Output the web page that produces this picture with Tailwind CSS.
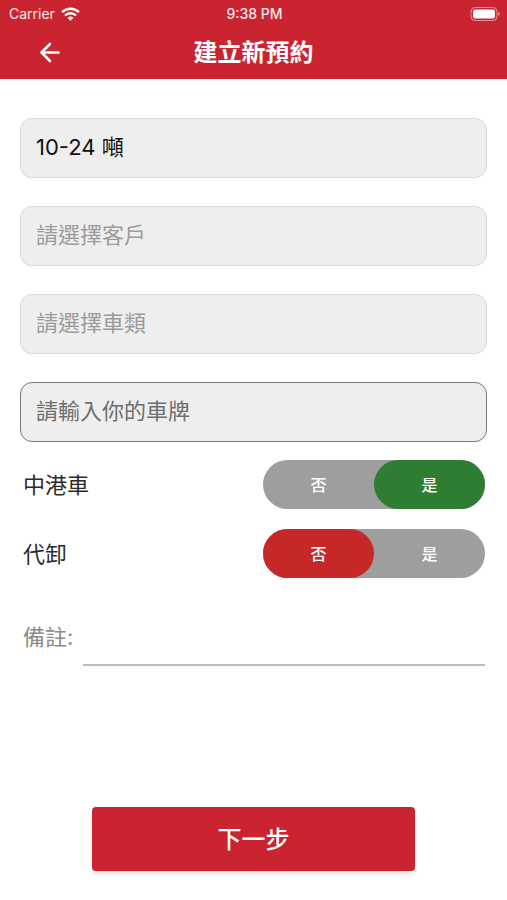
<!DOCTYPE html>
<html lang="zh-Hant">
<head>
  <meta charset="UTF-8" />
  <meta name="viewport" content="width=device-width, initial-scale=1.0" />
  <title>建立新預約</title>
  <script src="https://cdn.jsdelivr.net/npm/@tailwindcss/browser@4"></script>
</head>
<body class="bg-white font-['Inter','Noto_Sans_CJK_TC',sans-serif]">
  <div class="flex min-h-screen flex-col">

    <header class="bg-[#c9242f] text-white">
      <!-- status bar -->
      <div class="grid h-[27px] grid-cols-3 items-center pr-[7px] pl-[9px] text-sm text-white/90">
        <div class="flex items-center gap-1.5">
          <span>Carrier</span>
          <svg class="h-[14px] w-[19px]" viewBox="0 0 19 14" fill="none" stroke="#fff" stroke-width="2.4">
            <path d="M1 5.2a12.2 12.2 0 0 1 17 0" />
            <path d="M4 8.5a7.9 7.9 0 0 1 11 0" />
            <path d="M9.5 13.8 6.6 10.9a4.1 4.1 0 0 1 5.8 0z" fill="#fff" stroke="none" />
          </svg>
        </div>
        <span class="text-center font-medium">9:38 PM</span>
        <svg class="h-[14px] w-[30px] justify-self-end" viewBox="0 0 30 14" fill="none">
          <rect x="1" y="0.5" width="26" height="13" rx="4" stroke="#fff" stroke-opacity=".5" />
          <rect x="3" y="2.5" width="22" height="9" rx="2" fill="#fff" />
          <path d="M28.3 5v4c1-.4 1.5-1.1 1.5-2s-.5-1.6-1.5-2z" fill="#fff" fill-opacity=".5" />
        </svg>
      </div>
      <!-- app bar -->
      <div class="grid h-[52px] grid-cols-[100px_1fr_100px] items-center">
        <button type="button" aria-label="返回" class="flex h-full items-center justify-center">
          <svg class="size-6" viewBox="0 0 24 24" fill="none" stroke="#fff" stroke-width="2.6" stroke-linecap="round" stroke-linejoin="round">
            <path d="M20.500 11.500H3.500M12 3 3.500 11.500 12 20" />
          </svg>
        </button>
        <h1 class="text-center text-2xl font-bold">建立新預約</h1>
      </div>
    </header>

    <form class="flex grow flex-col px-5 pt-[39px] pb-[29px]">
      <div class="flex flex-col gap-7 text-[22px]">
        <select aria-label="噸數" class="h-[60px] appearance-none rounded-xl border border-[#d9d9d9] bg-[#eeeeee] px-[15px] pb-0.5 text-[#111]">
          <option>10-24 噸</option>
        </select>
        <select aria-label="客戶" class="h-[60px] appearance-none rounded-xl border border-[#d9d9d9] bg-[#eeeeee] px-[15px] pb-0.5 text-[#9b9b9b]">
          <option>請選擇客戶</option>
        </select>
        <select aria-label="車類" class="h-[60px] appearance-none rounded-xl border border-[#d9d9d9] bg-[#eeeeee] px-[15px] pb-0.5 text-[#9b9b9b]">
          <option>請選擇車類</option>
        </select>
        <input type="text" aria-label="車牌" placeholder="請輸入你的車牌" class="h-[60px] rounded-xl border border-[#777] bg-[#eeeeee] px-[15px] pb-0.5 text-[#111] placeholder:text-[#6e6e6e]" />
      </div>

      <div role="radiogroup" aria-labelledby="crossBorderLabel" class="mt-[18px] flex items-center justify-between pr-0.5 pl-[3px]">
        <span id="crossBorderLabel" class="pt-0.5 text-[22px] text-[#2b2b2b]">中港車</span>
        <div class="grid h-[49px] w-[222px] grid-cols-2 rounded-full bg-[#9e9e9e] font-medium text-white">
          <label class="relative flex items-center justify-center rounded-full has-checked:bg-[#c62828]">
            <input type="radio" name="crossBorder" value="no" class="absolute inset-0 appearance-none" />否
          </label>
          <label class="relative flex items-center justify-center rounded-full has-checked:bg-[#2e7d32]">
            <input type="radio" name="crossBorder" value="yes" class="absolute inset-0 appearance-none" checked />是
          </label>
        </div>
      </div>

      <div role="radiogroup" aria-labelledby="unloadLabel" class="mt-5 flex items-center justify-between pr-0.5 pl-[3px]">
        <span id="unloadLabel" class="pt-0.5 text-[22px] text-[#2b2b2b]">代卸</span>
        <div class="grid h-[49px] w-[222px] grid-cols-2 rounded-full bg-[#9e9e9e] font-medium text-white">
          <label class="relative flex items-center justify-center rounded-full has-checked:bg-[#c62828]">
            <input type="radio" name="unload" value="no" class="absolute inset-0 appearance-none" checked />否
          </label>
          <label class="relative flex items-center justify-center rounded-full has-checked:bg-[#2e7d32]">
            <input type="radio" name="unload" value="yes" class="absolute inset-0 appearance-none" />是
          </label>
        </div>
      </div>

      <div class="mt-[30px] flex items-center gap-2.5 pr-0.5 pl-[3px] text-[22px]">
        <label for="remark" class="text-[#8a8a8a]">備註:</label>
        <input id="remark" type="text" class="h-[58px] min-w-0 grow border-b-2 border-[#bdbdbd] outline-none" />
      </div>

      <button type="submit" class="mx-auto mt-auto h-16 w-[69%] rounded bg-[#c9242f] pt-0.5 text-2xl font-medium text-white shadow-md">下一步</button>
    </form>

  </div>
</body>
</html>
